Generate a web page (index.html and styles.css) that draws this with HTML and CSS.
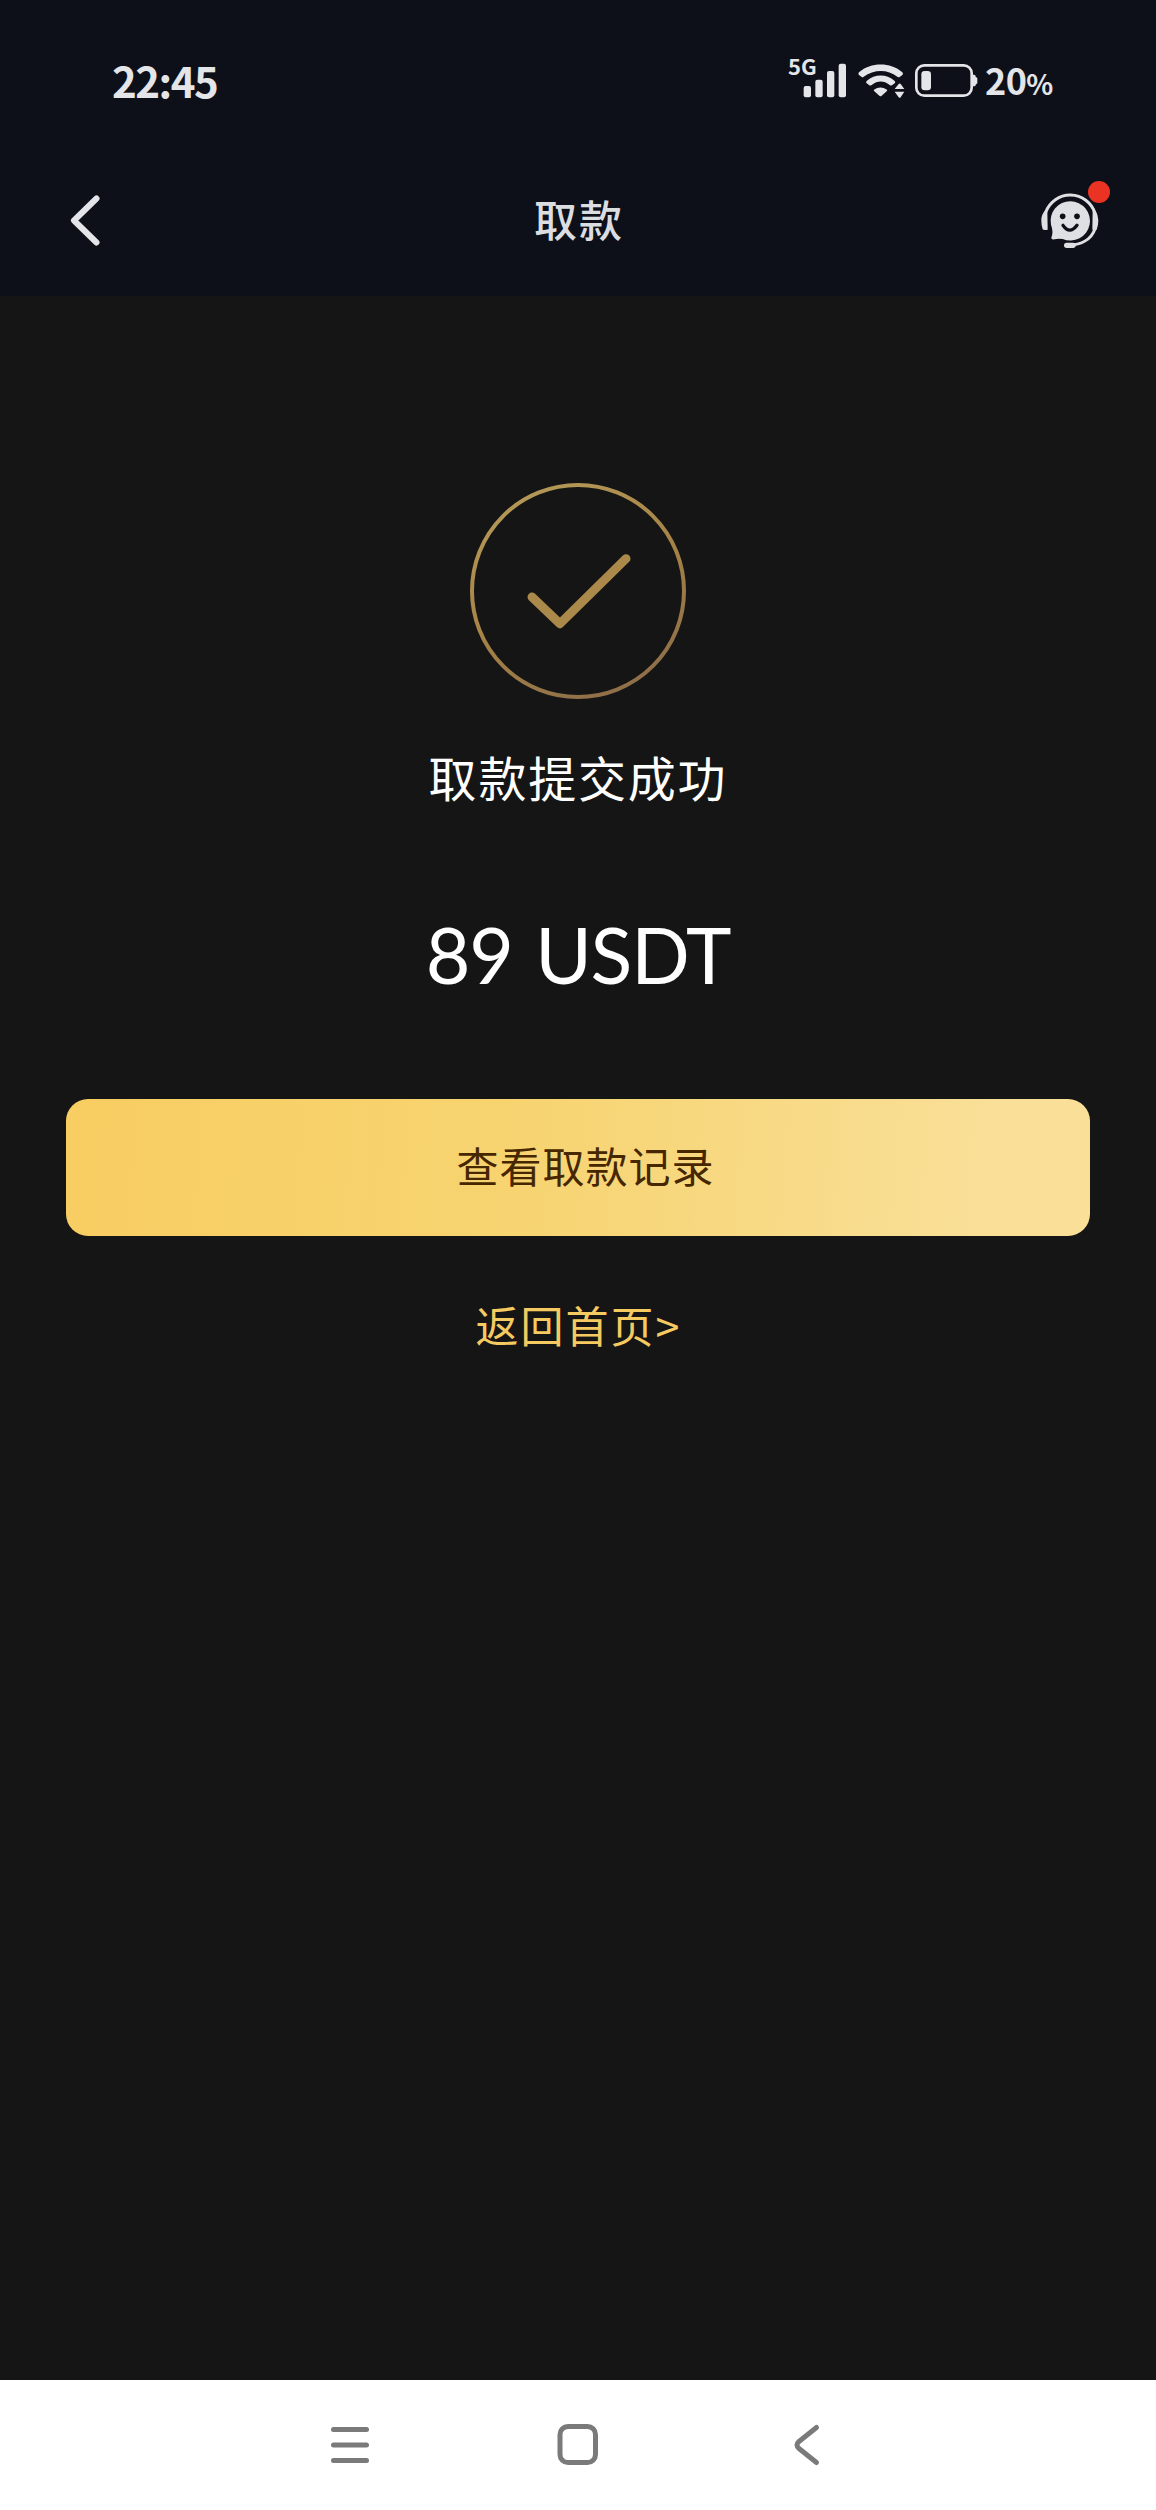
FILE: index.html
```html
<!DOCTYPE html>
<html lang="zh-CN">
<head>
<meta charset="utf-8">
<title>取款</title>
<link rel="stylesheet" href="styles.css">
</head>
<body>
<div class="screen">
  <header class="header">
    <div class="status">
      <span class="time">22:45</span>
      <div class="indicators">
        <svg class="signal" viewBox="45 0 195 240" fill="currentColor">
          <text class="network" x="54" y="106" textLength="86" lengthAdjust="spacingAndGlyphs">5G</text>
          <rect x="101" y="138" width="22" height="34" rx="6"/>
          <rect x="136" y="119" width="22" height="53" rx="6"/>
          <rect x="171" y="93" width="22" height="79" rx="6"/>
          <rect x="206" y="71" width="22" height="101" rx="6"/>
        </svg>
        <svg class="wifi" viewBox="255 45 150 150" fill="currentColor">
          <path d="M266 104Q264 100 267 97C303 66 361 66 397 97Q400 100 398 104L389 111Q386 113 382 110C353 87 312 87 281 110Q278 113 275 111Z"/>
          <path d="M289 129Q287 126 290 123C315 101 349 101 374 123Q377 126 375 129L366 136Q363 138 359 135C341 121 323 121 305 135Q301 138 298 136Z"/>
          <path d="M312 149Q331 136 351 149Q353 151 350 154L335 167Q332 170 328 167L313 154Q310 151 312 149Z"/>
          <path d="M374 147L386 132Q389 129 392 132L403 147ZM374 155H403L392 172Q389 175 386 172Z"/>
        </svg>
        <svg class="battery" viewBox="429 45 195 150" fill="currentColor">
          <rect x="439" y="76" width="166" height="91" rx="24" fill="none" stroke="currentColor" stroke-width="8"/>
          <rect x="454" y="93" width="29" height="58" rx="10"/>
          <path d="M608 104H613Q617 104 617 110L622 114V130L617 134Q617 139 613 139H608Z"/>
        </svg>
        <span class="percent">20<small>%</small></span>
      </div>
    </div>
    <nav class="titlebar">
      <svg class="back" viewBox="0 0 36 54"><path d="M28.500 5.500L6 27.500L28.500 49.500"/></svg>
      <h1 class="title">取款</h1>
      <svg class="support" viewBox="60 60 216 216">
        <path class="band" d="M77 157A78 78 0 0 1 225 160M225 206C214 239 182 255 143 256"/>
        <path class="light" d="M82 153H74Q64 164 64 181Q64 198 68 208Q72 212 83 209ZM218 153H227Q235 166 235 181Q235 197 230 209H217Z"/>
        <rect class="light" x="132" y="248" width="35" height="16" rx="8"/>
        <path class="light" d="M93 194A59 59 0 1 1 128 237Q114 235 104 238Q93 240 94 233Q101 215 93 194Z"/>
        <circle class="dark" cx="128" cy="169" r="8.500"/>
        <circle class="dark" cx="171" cy="169" r="8.500"/>
        <path class="smile" d="M129 196Q149 225 171 196"/>
        <circle cx="237" cy="96" r="33" fill="#ea3323"/>
      </svg>
    </nav>
  </header>
  <main class="result">
    <svg class="check" viewBox="54 33 660 660">
      <defs>
        <linearGradient id="gold" x1="0.200" y1="0" x2="0.700" y2="1">
          <stop offset="0" stop-color="#b69a58"/>
          <stop offset="0.500" stop-color="#a68346"/>
          <stop offset="1" stop-color="#8e6e49"/>
        </linearGradient>
      </defs>
      <circle cx="384" cy="363" r="318" stroke="url(#gold)" stroke-width="12"/>
      <path d="M246 381L330 461L528 266" stroke="#ab894a" stroke-width="27"/>
    </svg>
    <p class="message">取款提交成功</p>
    <p class="amount">89 USDT</p>
    <button class="records">查看取款记录</button>
    <a class="home">返回首页<span class="more">&gt;</span></a>
  </main>
  <footer class="sysnav">
    <svg viewBox="0 0 48 48"><path d="M7.500 8.500H40.500M7.500 24H40.500M7.500 39.500H40.500"/></svg>
    <svg viewBox="0 0 48 48"><rect x="6" y="5.500" width="35.500" height="36" rx="8"/></svg>
    <svg viewBox="0 0 48 48"><path d="M34.500 6.500L17 20.500Q13 24 17 27.500L34.500 41.500"/></svg>
  </footer>
</div>
</body>
</html>
```
FILE: styles.css
```css
* { box-sizing: border-box; margin: 0; padding: 0; }

body {
  background: #151515;
  font-family: "Noto Sans CJK SC", sans-serif;
  color: #fff;
}

svg { display: block; flex: none; }

.screen {
  display: flex;
  flex-direction: column;
  height: 2510px;
}

.header {
  height: 296px;
  background: #0d1018;
  color: #e4e5e9;
}

.status {
  display: flex;
  align-items: center;
  justify-content: space-between;
  height: 144px;
  padding: 16px 103px 0 112px;
}

.time {
  padding-bottom: 1px;
  font-size: 42px;
  font-weight: 700;
  line-height: 50px;
  letter-spacing: -1.5px;
}

.indicators { display: flex; align-items: center; }
.signal { width: 65px; height: 80px; }
.network { font: 700 63px "Noto Sans CJK SC", sans-serif; }
.wifi { width: 50px; height: 50px; margin-left: 5px; }
.battery { width: 65px; height: 50px; margin-left: 8px; }

.percent {
  margin-left: 7px;
  width: 68px;
  padding-top: 2px;
  font-size: 36px;
  font-weight: 700;
  line-height: 50px;
  letter-spacing: -0.6px;
  white-space: nowrap;
}
.percent small { font-size: 28px; }

.titlebar {
  display: flex;
  align-items: center;
  justify-content: space-between;
  height: 152px;
  padding: 0 44px 0 68px;
}

.back { width: 36px; height: 54px; margin-right: 14px; }
.back path {
  fill: none;
  stroke: currentColor;
  stroke-width: 6;
  stroke-linecap: round;
  stroke-linejoin: round;
}

.title {
  font-size: 43px;
  font-weight: 500;
  line-height: 56px;
  letter-spacing: 2px;
  padding-bottom: 4px;
  color: #dcdde1;
}

.support { width: 72px; height: 72px; margin-top: -8px; }
.light { fill: #dfe0e3; }
.dark { fill: #0d1018; }
.band {
  fill: none;
  stroke: #dfe0e3;
  stroke-width: 9;
  stroke-linecap: round;
}
.smile {
  fill: none;
  stroke: #0d1018;
  stroke-width: 10;
  stroke-linecap: round;
}

.result {
  flex: 1;
  display: flex;
  flex-direction: column;
  align-items: center;
  padding: 185px 66px 0;
}

.check {
  width: 220px;
  height: 220px;
  fill: none;
  stroke-linecap: round;
  stroke-linejoin: round;
}

.message {
  margin-top: 40px;
  font-size: 48px;
  line-height: 70px;
  letter-spacing: 1.8px;
}

.amount {
  margin-top: 98px;
  font-family: Lato, sans-serif;
  font-size: 77px;
  line-height: 90px;
  letter-spacing: -1.2px;
  word-spacing: 4px;
}

.records {
  width: 1024px;
  height: 137px;
  margin-top: 100px;
  padding: 0 0 5px 15px;
  border: 0;
  border-radius: 22px;
  background: linear-gradient(95deg, #f8cd62, #f7d471 45%, #f9df98 90%);
  color: #472700;
  font: 400 42px/60px "Noto Sans CJK SC", sans-serif;
  letter-spacing: 1px;
}

.home {
  margin-top: 58px;
  padding-right: 1px;
  font-size: 43px;
  line-height: 60px;
  letter-spacing: 2px;
  color: #f5ca61;
}
.more { letter-spacing: 0; }

.sysnav {
  display: flex;
  justify-content: center;
  gap: 180px;
  height: 130px;
  padding-top: 41px;
  background: #fff;
}
.sysnav svg {
  width: 48px;
  height: 48px;
  fill: none;
  stroke: #7a7a7a;
  stroke-width: 5;
  stroke-linecap: round;
  stroke-linejoin: round;
}
```
